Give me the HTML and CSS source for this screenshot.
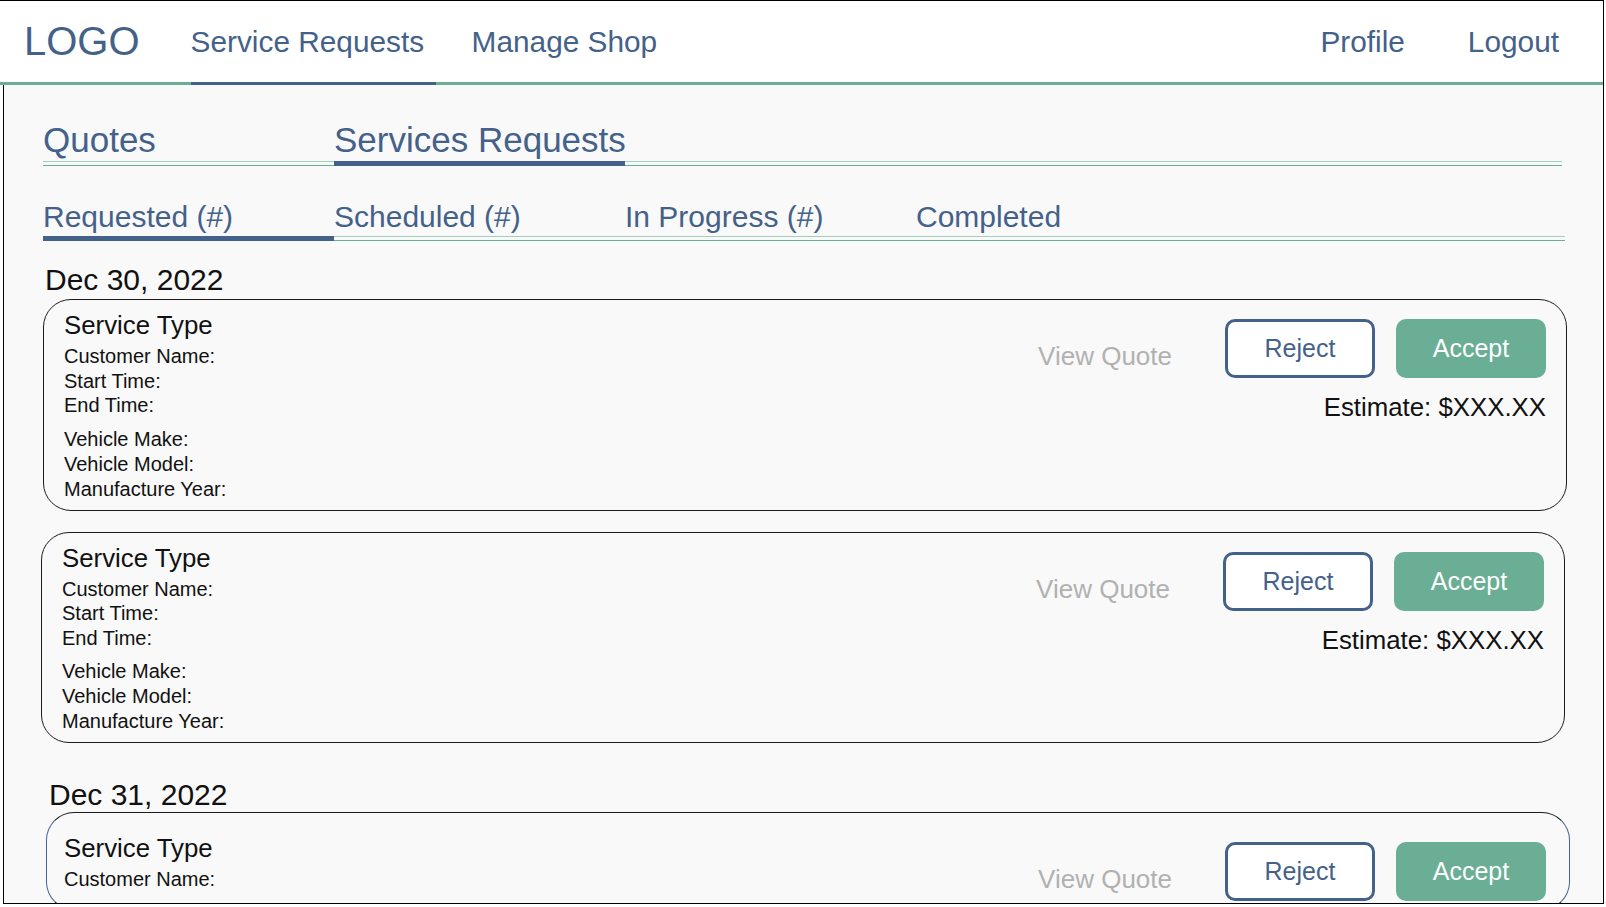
FILE: index.html
```html
<!DOCTYPE html>
<html lang="en">
<head>
<meta charset="utf-8">
<title>Service Requests</title>
<link rel="stylesheet" href="styles.css">
</head>
<body>
<div class="frame">
  <header class="topbar">
    <div class="logo">LOGO</div>
    <a class="nav-link nav-link-active nav-first">Service Requests</a>
    <a class="nav-link nav-manage">Manage Shop</a>
    <a class="nav-link nav-profile">Profile</a>
    <a class="nav-link nav-logout">Logout</a>
  </header>
  <main class="main">
    <nav class="tabs tabs-primary">
      <span class="tab">Quotes</span>
      <span class="tab tab-active">Services Requests</span>
    </nav>
    <nav class="tabs tabs-secondary">
      <span class="tab tab-active">Requested (#)</span>
      <span class="tab">Scheduled (#)</span>
      <span class="tab">In Progress (#)</span>
      <span class="tab">Completed</span>
    </nav>

    <h2 class="date date-first">Dec 30, 2022</h2>
    <section class="card card-a">
      <div class="info">
        <div class="title">Service Type</div>
        <div class="fields fields-top">
          <div>Customer Name:</div>
          <div>Start Time:</div>
          <div>End Time:</div>
        </div>
        <div class="fields fields-vehicle">
          <div>Vehicle Make:</div>
          <div>Vehicle Model:</div>
          <div>Manufacture Year:</div>
        </div>
      </div>
      <a class="view-quote">View Quote</a>
      <div class="actions">
        <div class="buttons">
          <button class="btn btn-reject">Reject</button>
          <button class="btn btn-accept">Accept</button>
        </div>
        <div class="estimate">Estimate: $XXX.XX</div>
      </div>
    </section>

    <section class="card card-b">
      <div class="info">
        <div class="title">Service Type</div>
        <div class="fields fields-top">
          <div>Customer Name:</div>
          <div>Start Time:</div>
          <div>End Time:</div>
        </div>
        <div class="fields fields-vehicle">
          <div>Vehicle Make:</div>
          <div>Vehicle Model:</div>
          <div>Manufacture Year:</div>
        </div>
      </div>
      <a class="view-quote">View Quote</a>
      <div class="actions">
        <div class="buttons">
          <button class="btn btn-reject">Reject</button>
          <button class="btn btn-accept">Accept</button>
        </div>
        <div class="estimate">Estimate: $XXX.XX</div>
      </div>
    </section>

    <h2 class="date date-second">Dec 31, 2022</h2>
    <section class="card card-c">
      <div class="info">
        <div class="title">Service Type</div>
        <div class="fields fields-top">
          <div>Customer Name:</div>
        </div>
      </div>
      <a class="view-quote">View Quote</a>
      <div class="actions">
        <div class="buttons">
          <button class="btn btn-reject">Reject</button>
          <button class="btn btn-accept">Accept</button>
        </div>
      </div>
    </section>
  </main>
</div>
</body>
</html>
```

FILE: styles.css
```css
* {
  box-sizing: border-box;
}

html, body {
  margin: 0;
  padding: 0;
  background: #ffffff;
  overflow: hidden;
}

body {
  font-family: "Liberation Sans", Arial, Helvetica, sans-serif;
  color: #111111;
}

.frame {
  width: 1604px;
  height: 904px;
  border-top: 1px solid #000000;
  border-right: 1px solid #000000;
  display: flex;
  flex-direction: column;
  overflow: hidden;
}

/* ---------- top bar ---------- */
.topbar {
  display: flex;
  align-items: stretch;
  height: 84px;
  flex: 0 0 84px;
  background: #ffffff;
  border-bottom: 3px solid #6aae95;
  padding: 0 44px 0 24px;
}

.logo {
  display: flex;
  align-items: center;
  font-size: 40px;
  color: #44618a;
}

.nav-link {
  display: flex;
  align-items: center;
  font-size: 29.8px;
  color: #44618a;
  white-space: nowrap;
  text-decoration: none;
}

.nav-first {
  margin-left: 51px;
  width: 245px;
}

.nav-link-active {
  border-bottom: 3px solid #44618a;
  margin-bottom: -3px;
}

.nav-manage {
  margin-left: 36px;
}

.nav-profile {
  margin-left: auto;
}

.nav-logout {
  margin-left: 63px;
}

/* ---------- main ---------- */
.main {
  flex: 1 1 auto;
  margin-left: 3px;
  background: #f9f9f9;
  border-left: 1px solid #000000;
  border-bottom: 1px solid #000000;
  padding: 35px 41px 0 39px;
  overflow: hidden;
}

.tabs {
  display: flex;
  background-image:
    linear-gradient(#a3cfbe, #a3cfbe),
    linear-gradient(#6aae95, #6aae95);
  background-size: 100% 1px, 100% 1px;
  background-position: 0 calc(100% - 4px), 0 100%;
  background-repeat: no-repeat;
}

.tab {
  width: 291px;
  flex: 0 0 291px;
  color: #44618a;
  white-space: nowrap;
  border-bottom: 5px solid transparent;
}

.tab-active {
  border-bottom-color: #44618a;
}

.tabs-primary .tab {
  font-size: 35px;
  line-height: 40px;
  padding-bottom: 1px;
}

.tabs-secondary {
  margin-top: 34px;
  margin-right: -3px;
}

.tabs-secondary .tab {
  font-size: 30px;
  line-height: 34px;
  padding-bottom: 2px;
}

/* ---------- dates ---------- */
.date {
  margin: 0;
  font-weight: normal;
  font-size: 30px;
  line-height: 33px;
  color: #111111;
}

.date-first {
  margin: 22px 0 3px 2px;
}

.date-second {
  margin: 35px 0 1px 6px;
}

/* ---------- cards ---------- */
.card {
  width: 1524px;
  display: flex;
  align-items: flex-start;
  border: 1px solid #1c1c1c;
  border-radius: 28px;
  background: #f9f9f9;
  padding: 11px 20px 8px 20px;
}

.card-b {
  margin-top: 21px;
  margin-left: -2px;
}

.card-c {
  margin-left: 3px;
  padding: 21px 23px 8px 17px;
  border-left-color: #46659a;
  border-right-color: #46659a;
}

.info {
  flex: 1 1 auto;
}

.title {
  font-size: 25.8px;
  line-height: 29px;
}

.fields {
  font-size: 20px;
}

.fields-top {
  margin-top: 4px;
  line-height: 24.5px;
}

.fields-vehicle {
  margin-top: 9px;
  line-height: 25px;
}

.view-quote {
  margin-top: 31px;
  margin-right: 53px;
  font-size: 26px;
  line-height: 29px;
  color: #b1b1b1;
  white-space: nowrap;
}

.actions {
  margin-top: 8px;
  display: flex;
  flex-direction: column;
  align-items: flex-end;
}

.buttons {
  display: flex;
  gap: 21px;
}

.btn {
  width: 150px;
  height: 59px;
  border-radius: 10px;
  font-family: "Liberation Sans", Arial, Helvetica, sans-serif;
  font-size: 25px;
  padding: 0;
  cursor: pointer;
}

.btn-reject {
  background: #ffffff;
  border: 3px solid #44618a;
  color: #44618a;
}

.btn-accept {
  background: #6aae95;
  border: 3px solid #6aae95;
  color: #ffffff;
}

.estimate {
  margin-top: 14px;
  font-size: 25.8px;
  line-height: 30px;
  color: #111111;
  white-space: nowrap;
}
```
